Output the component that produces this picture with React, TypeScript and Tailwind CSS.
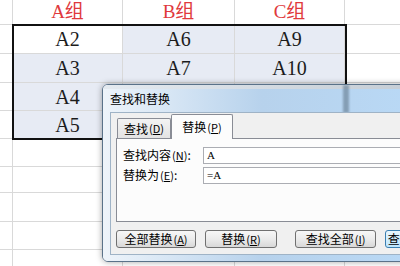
import React from "react";

const colW = [13, 110, 112, 110, 60];
const rowH = [25, 29, 29, 28, 28, 28, 26, 29, 28, 20];
const data: Record<string, string> = {
  "0-1": "A组",
  "0-2": "B组",
  "0-3": "C组",
  "1-1": "A2",
  "1-2": "A6",
  "1-3": "A9",
  "2-1": "A3",
  "2-2": "A7",
  "2-3": "A10",
  "3-1": "A4",
  "4-1": "A5",
};

const cjk = { fontFamily: '"Noto Sans CJK SC", "Noto Sans", sans-serif' };
const serif = { fontFamily: '"Liberation Serif", "Noto Sans CJK SC", serif' };

function M({ c }: { c: string }) {
  return (
    <span className="text-[11px] ml-[1px]">
      (<span className="underline">{c}</span>)
    </span>
  );
}

function Btn({ children, w, def }: { children: React.ReactNode; w: string; def?: boolean }) {
  return (
    <div
      className={`${w} h-[18px] shrink-0 rounded-[3px] border flex items-center justify-center text-[12px] text-black leading-none ${
        def
          ? "border-[#3c7fb1] bg-gradient-to-b from-[#eaf6fd] to-[#bee6fd]"
          : "border-[#707070] bg-gradient-to-b from-[#f7f7f7] via-[#ebebeb] to-[#d8d8d8]"
      }`}
    >
      {children}
    </div>
  );
}

export default function App() {
  return (
    <div className="relative w-[400px] h-[266px] overflow-hidden bg-white">
      {/* spreadsheet */}
      <div className="flex flex-col">
        {rowH.map((h, r) => (
          <div key={r} className="flex" style={{ height: h }}>
            {colW.map((w, c) => {
              const txt = data[`${r}-${c}`];
              const sel = r >= 1 && r <= 4 && c >= 1 && c <= 3;
              const active = r === 1 && c === 1;
              return (
                <div
                  key={c}
                  className={`shrink-0 border-r border-b border-[#d9d9d9] flex items-center justify-center ${
                    sel && !active ? "bg-[#e7ebf4]" : "bg-white"
                  } ${r === 0 ? "text-[#e0393c] text-[19px]" : "text-[#1c1c1c] text-[20px]"}`}
                  style={{ width: w, ...serif }}
                >
                  {txt}
                </div>
              );
            })}
          </div>
        ))}
      </div>
      {/* selection border */}
      <div className="absolute left-[12px] top-[24px] w-[335px] h-[116px] border-[2px] border-[#111]" />

      {/* dialog */}
      <div
        className="absolute left-[102px] top-[84px] w-[320px] h-[178px] rounded-[6px] border border-[#5a7289] overflow-hidden shadow-[0_0_6px_rgba(0,0,0,0.35)]"
        style={cjk}
      >
        {/* frame background */}
        <div className="absolute inset-0 bg-gradient-to-r from-[#eef4fa] via-[#b7d2ec] to-[#b9d9f6]" />
        <div className="absolute left-0 right-0 top-0 h-[4px] bg-gradient-to-r from-[#e4eaf0] to-[#c4ccd4]" />
        <div className="absolute left-[240px] top-0 w-[6px] h-[28px] bg-[#6f879c] opacity-70 blur-[1px]" />
        <div className="relative flex flex-col h-full">
          <div className="h-[27px] shrink-0 flex items-center pl-[7px] pt-[1px] text-[12px] text-black">
            查找和替换
          </div>
          <div className="mx-[7px] mb-[6px] flex-1 bg-[#f0f0f0] border border-[#9fb3c6] border-r-0 flex flex-col">
            {/* tabs */}
            <div className="flex items-end h-[25px] pl-[6px] shrink-0">
              <div className="h-[20px] w-[54px] border border-b-0 border-[#898c95] bg-gradient-to-b from-[#f3f3f3] to-[#e3e3e3] flex items-center justify-center text-[12px] rounded-t-[2px]">
                查找<M c="D" />
              </div>
              <div className="relative z-10 h-[25px] w-[62px] -mb-[1px] border border-b-0 border-[#898c95] bg-[#fcfcfc] flex items-center justify-center text-[12px] rounded-t-[2px]">
                替换<M c="P" />
              </div>
            </div>
            <div className="ml-[5px] h-[84px] shrink-0 border border-r-0 border-[#898c95] bg-[#fcfcfc] flex flex-col pt-[8px] gap-[4px]">
              <div className="flex items-center h-[16px]">
                <div className="w-[86px] pl-[6px] text-[12px] leading-none">
                  查找内容<M c="N" />:
                </div>
                <div className="flex-1 h-[17px] border border-[#abadb3] bg-white flex items-center pl-[3px] text-[11px]" style={serif}>
                  A
                </div>
              </div>
              <div className="flex items-center h-[16px]">
                <div className="w-[86px] pl-[6px] text-[12px] leading-none">
                  替换为<M c="E" />:
                </div>
                <div className="flex-1 h-[17px] border border-[#abadb3] bg-white flex items-center pl-[3px] text-[11px]" style={serif}>
                  =A
                </div>
              </div>
            </div>
            <div className="flex items-center pl-[5px] pt-[8px]">
              <Btn w="w-[80px]">
                全部替换<M c="A" />
              </Btn>
              <div className="w-[9px] shrink-0" />
              <Btn w="w-[72px]">
                替换<M c="R" />
              </Btn>
              <div className="w-[18px] shrink-0" />
              <Btn w="w-[81px]">
                查找全部<M c="I" />
              </Btn>
              <div className="w-[9px] shrink-0" />
              <Btn w="w-[80px]" def>
                查找下一个<M c="F" />
              </Btn>
            </div>
          </div>
        </div>
      </div>
    </div>
  );
}
